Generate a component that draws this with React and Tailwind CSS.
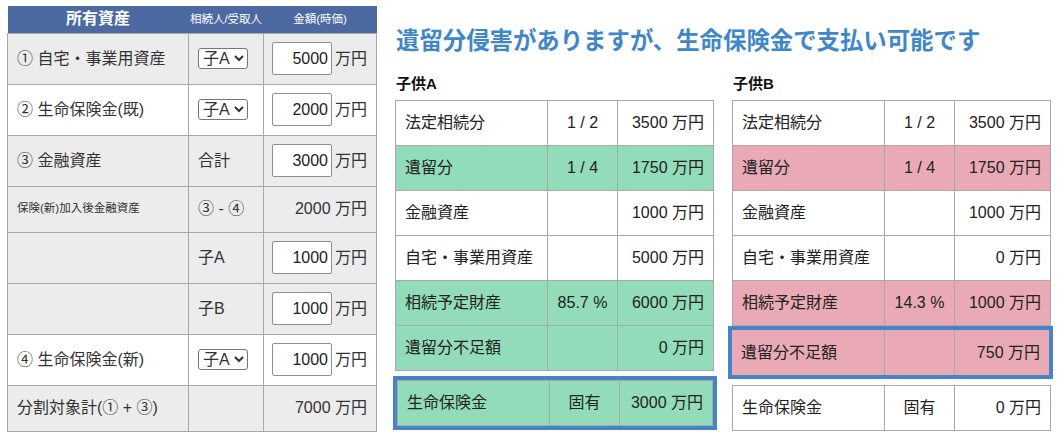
import React, { useState } from 'react';

const font = "font-['Liberation_Sans','Noto_Sans_CJK_JP',sans-serif]";

// 所有資産の入力行
const assetRows = [
  { label: '① 自宅・事業用資産', bg: 'gray', who: 'select', key: 'home', value: '5000' },
  { label: '② 生命保険金(既)', bg: 'white', who: 'select', key: 'lifeOld', value: '2000' },
  { label: '③ 金融資産', bg: 'gray', who: '合計', key: 'finance', value: '3000' },
  { label: '保険(新)加入後金融資産', small: true, bg: 'gray', who: '③ - ④', text: '2000' },
  { label: '', bg: 'gray', who: '子A', key: 'childA', value: '1000' },
  { label: '', bg: 'gray', who: '子B', key: 'childB', value: '1000' },
  { label: '④ 生命保険金(新)', bg: 'white', who: 'select', key: 'lifeNew', value: '1000' },
  { label: '分割対象計(① + ③)', bg: 'gray', who: '', text: '7000' },
];

const childA = [
  { name: '法定相続分', ratio: '1 / 2', amount: '3500', hl: false },
  { name: '遺留分', ratio: '1 / 4', amount: '1750', hl: true },
  { name: '金融資産', ratio: '', amount: '1000', hl: false },
  { name: '自宅・事業用資産', ratio: '', amount: '5000', hl: false },
  { name: '相続予定財産', ratio: '85.7 %', amount: '6000', hl: true },
  { name: '遺留分不足額', ratio: '', amount: '0', hl: true },
];

const childB = [
  { name: '法定相続分', ratio: '1 / 2', amount: '3500', hl: false },
  { name: '遺留分', ratio: '1 / 4', amount: '1750', hl: true },
  { name: '金融資産', ratio: '', amount: '1000', hl: false },
  { name: '自宅・事業用資産', ratio: '', amount: '0', hl: false },
  { name: '相続予定財産', ratio: '14.3 %', amount: '1000', hl: true },
];

const cell = 'border border-[#a9a9a9] h-[45px] px-[9px] text-[16px] text-[#222]';

const ResultRows = ({ rows, hlBg }) => (
  <table className="w-full table-fixed border-collapse">
    <colgroup>
      <col className="w-[152px]" />
      <col className="w-[70px]" />
      <col />
    </colgroup>
    <tbody>
      {rows.map((r) => (
        <tr key={r.name} className={r.hl ? hlBg : 'bg-white'}>
          <td className={cell}>{r.name}</td>
          <td className={`${cell} text-center`}>{r.ratio}</td>
          <td className={`${cell} text-right`}>{r.amount} 万円</td>
        </tr>
      ))}
    </tbody>
  </table>
);

const HeirSelect = ({ value, onChange }) => (
  <select
    value={value}
    onChange={(e) => onChange(e.target.value)}
    className="h-[21px] w-[50px] border border-[#767676] rounded-[3px] bg-white text-[16px] leading-none text-[#333]"
  >
    <option value="子A">子A</option>
    <option value="子B">子B</option>
  </select>
);

export default function App() {
  const [amounts, setAmounts] = useState(
    Object.fromEntries(assetRows.filter((r) => r.key).map((r) => [r.key, r.value]))
  );
  const [heirs, setHeirs] = useState({ home: '子A', lifeOld: '子A', lifeNew: '子A' });

  return (
    <div className={`${font} w-[1059px] h-[437px] bg-white flex items-start`}>
      {/* 所有資産テーブル */}
      <table className="ml-[7px] mt-[6px] w-[370px] table-fixed border-collapse text-[#333]">
        <colgroup>
          <col className="w-[181px]" />
          <col className="w-[75px]" />
          <col />
        </colgroup>
        <thead>
          <tr className="bg-[#4c69a2] text-white h-[27px]">
            <th className="text-[16px] font-bold text-center">所有資産</th>
            <th className="text-[11.5px] font-normal text-center">相続人/受取人</th>
            <th className="text-[11.5px] font-normal text-center">金額(時価)</th>
          </tr>
        </thead>
        <tbody>
          {assetRows.map((r, i) => (
            <tr
              key={i}
              className={`${r.bg === 'gray' ? 'bg-[#ececec]' : 'bg-white'} ${r.key ? 'h-[51px]' : 'h-[46px]'}`}
            >
              <td className={`border border-[#a9a9a9] px-[9px] ${r.small ? 'text-[11.5px]' : 'text-[16px]'}`}>
                {r.label}
              </td>
              <td className="border border-[#a9a9a9] px-[9px] text-[16px]">
                {r.who === 'select' ? (
                  <HeirSelect
                    value={heirs[r.key]}
                    onChange={(v) => setHeirs({ ...heirs, [r.key]: v })}
                  />
                ) : (
                  r.who
                )}
              </td>
              <td className="border border-[#a9a9a9] pr-[9px] text-right text-[16px]">
                {r.key ? (
                  <span className="inline-flex items-center gap-[3px]">
                    <input
                      type="text"
                      value={amounts[r.key]}
                      onChange={(e) => setAmounts({ ...amounts, [r.key]: e.target.value })}
                      className="h-[33px] w-[60px] border border-[#8f8f8f] rounded-[2px] bg-white text-right pr-[3px] text-[16px] text-[#222]"
                    />
                    万円
                  </span>
                ) : (
                  `${r.text} 万円`
                )}
              </td>
            </tr>
          ))}
        </tbody>
      </table>

      {/* 判定結果 */}
      <div className="ml-[18px] flex flex-col">
        <h2 className="mt-[25px] ml-[1px] text-[23.4px] leading-[32px] font-bold text-[#3f87c8]">
          遺留分侵害がありますが、生命保険金で支払い可能です
        </h2>
        <div className="mt-[17px] flex gap-[18px]">
          <div className="w-[319px] flex flex-col">
            <div className="ml-[1px] text-[15px] font-bold text-[#111] leading-[20px] mb-[6px]">子供A</div>
            <ResultRows rows={childA} hlBg="bg-[#93dcb9]" />
            <div className="mt-[5px] -ml-[2px] w-[324px] border-4 border-[#4784c6]">
              <ResultRows
                rows={[{ name: '生命保険金', ratio: '固有', amount: '3000', hl: true }]}
                hlBg="bg-[#93dcb9]"
              />
            </div>
          </div>
          <div className="w-[319px] flex flex-col">
            <div className="ml-[1px] text-[15px] font-bold text-[#111] leading-[20px] mb-[6px]">子供B</div>
            <ResultRows rows={childB} hlBg="bg-[#e9aab5]" />
            <div className="-ml-[4px] w-[325px] border-4 border-[#4784c6]">
              <table className="w-full table-fixed border-collapse bg-[#e9aab5]">
                <colgroup>
                  <col className="w-[152px]" />
                  <col className="w-[70px]" />
                  <col />
                </colgroup>
                <tbody>
                  <tr>
                    <td className="h-[45px] px-[9px] text-[16px] text-[#222] border-r border-[#a9a9a9]">遺留分不足額</td>
                    <td className="h-[45px] border-r border-[#a9a9a9]"></td>
                    <td className="h-[45px] px-[9px] text-[16px] text-[#222] text-right">750 万円</td>
                  </tr>
                </tbody>
              </table>
            </div>
            <div className="mt-[6px]">
              <ResultRows
                rows={[{ name: '生命保険金', ratio: '固有', amount: '0', hl: false }]}
                hlBg="bg-white"
              />
            </div>
          </div>
        </div>
      </div>
    </div>
  );
}
